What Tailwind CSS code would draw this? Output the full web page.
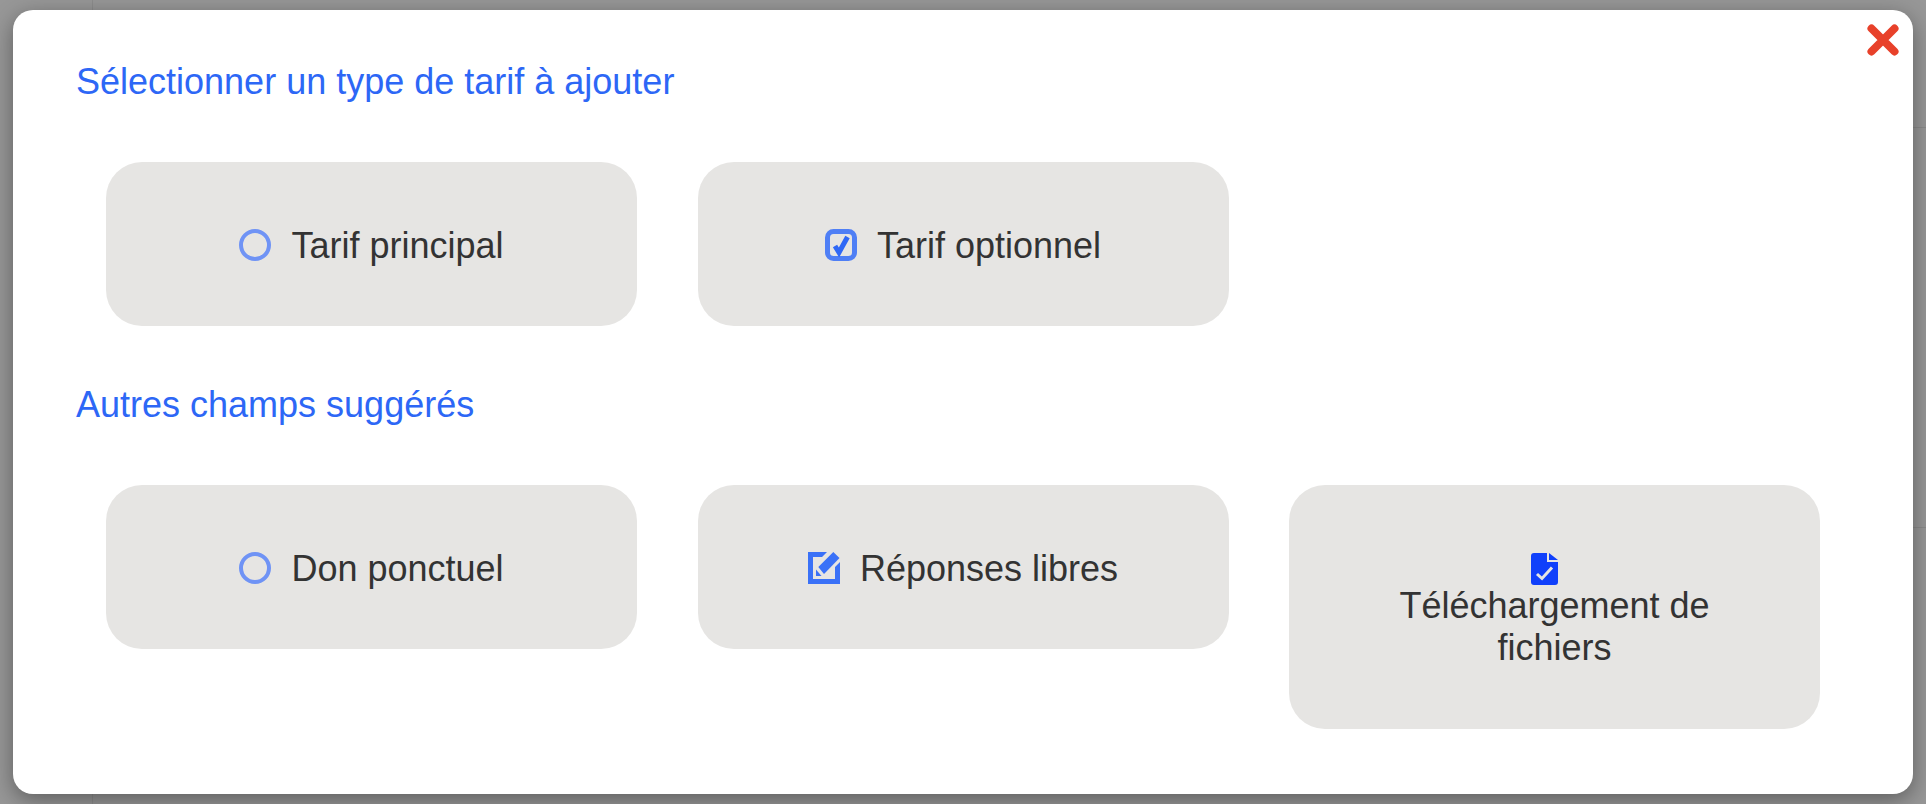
<!DOCTYPE html>
<html lang="fr">
<head>
<meta charset="utf-8">
<title>Tarif</title>
<script src="https://cdn.jsdelivr.net/npm/@tailwindcss/browser@4"></script>
</head>
<body class="m-0 h-[804px] w-[1926px] overflow-hidden bg-[#979797] font-['Liberation_Sans',Arial,sans-serif]">
<div class="relative h-[804px] w-[1926px] overflow-hidden">
  <div class="absolute left-[92px] top-0 h-full w-px bg-[#8c8c8c]"></div>
  <div class="absolute left-[1900px] top-[127px] h-px w-[26px] bg-[#8a8a8a]"></div>
  <div class="absolute left-[1900px] top-[527px] h-px w-[26px] bg-[#8a8a8a]"></div>
  <div class="relative ml-[13px] mt-[10px] h-[784px] w-[1900px] rounded-[20px] bg-white pl-[63px] pt-[49px] shadow-[0_6px_22px_rgba(0,0,0,0.38)]">
    <button class="absolute right-[13px] top-[13px] text-[#e8412a]" aria-label="Fermer">
      <svg class="size-[34px]" viewBox="0 0 34 34"><path d="M5.500 5.500 L28.500 28.500 M28.500 5.500 L5.500 28.500" stroke="currentColor" stroke-width="8" stroke-linecap="round" fill="none"/></svg>
    </button>
    <h2 class="h-[44px] pt-[1px] text-[36px] leading-[44px] font-normal text-[#2d67f6]">Sélectionner un type de tarif à ajouter</h2>
    <div class="mt-[59px] flex gap-[60.5px] pl-[30px]">
      <div class="flex h-[164px] w-[531px] items-center justify-center gap-[20px] rounded-[36px] bg-[#e6e5e3] pt-[2px] text-[36px] text-[#333]">
        <svg class="size-[32px]" viewBox="0 0 32 32"><circle cx="16" cy="16" r="14" fill="none" stroke="#6f93f5" stroke-width="4"/></svg>
        <span class="pt-[2px]">Tarif principal</span>
      </div>
      <div class="flex h-[164px] w-[531px] items-center justify-center gap-[20px] rounded-[36px] bg-[#e6e5e3] pt-[2px] text-[36px] text-[#333]">
        <svg class="size-[32px]" viewBox="0 0 32 32"><rect x="2.500" y="2.500" width="27" height="27" rx="6" fill="none" stroke="#4f7ff5" stroke-width="5"/><path d="M10 17 L14 23.500 L22.500 8" fill="none" stroke="#2f68f6" stroke-width="5"/></svg>
        <span class="pt-[2px]">Tarif optionnel</span>
      </div>
    </div>
    <h2 class="mt-[56px] h-[44px] pt-[1px] text-[36px] leading-[44px] font-normal text-[#2d67f6]">Autres champs suggérés</h2>
    <div class="mt-[59px] flex items-start gap-[60.5px] pl-[30px]">
      <div class="flex h-[164px] w-[531px] items-center justify-center gap-[20px] rounded-[36px] bg-[#e6e5e3] pt-[2px] text-[36px] text-[#333]">
        <svg class="size-[32px]" viewBox="0 0 32 32"><circle cx="16" cy="16" r="14" fill="none" stroke="#6f93f5" stroke-width="4"/></svg>
        <span class="pt-[2px]">Don ponctuel</span>
      </div>
      <div class="flex h-[164px] w-[531px] items-center justify-center gap-[20px] rounded-[36px] bg-[#e6e5e3] pt-[2px] text-[36px] text-[#333]">
        <svg class="size-[32px]" viewBox="0 0 32 32"><path d="M0 0H19L14 5H5V27H27V15L32 10V32H0Z" fill="#3a71f7"/><path d="M25.300 0L31.500 6L16 22L10.300 15Z" fill="#3a71f7"/><path d="M8 17.500L13.500 24H8Z" fill="#3a71f7"/></svg>
        <span class="pt-[2px]">Réponses libres</span>
      </div>
      <div class="flex h-[244px] w-[531px] flex-col items-center justify-center rounded-[36px] bg-[#e6e5e3] pt-[8px] text-center text-[36px] leading-[42px] text-[#333]">
        <svg class="mr-[20px] h-[32px] w-[27px]" viewBox="0 0 27 32"><path d="M3 0H16V9H27V29C27 31 26 32 24 32H3C1 32 0 31 0 29V3C0 1 1 0 3 0Z" fill="#1040fb"/><path d="M18 0L27 7H18Z" fill="#1040fb"/><path d="M6 21L11 25.500L21 14.500" fill="none" stroke="#e6e5e3" stroke-width="3"/></svg>
        <span>Téléchargement de<br>fichiers</span>
      </div>
    </div>
  </div>
</div>
</body>
</html>
